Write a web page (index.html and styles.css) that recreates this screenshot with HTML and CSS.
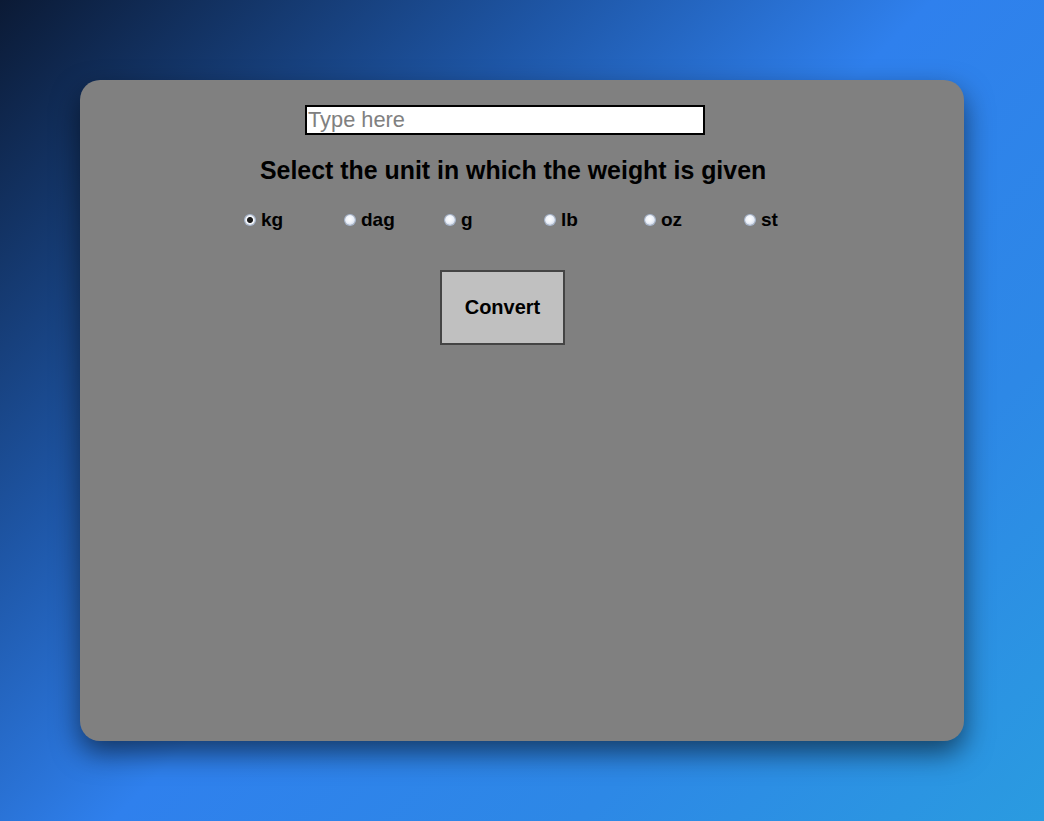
FILE: index.html
```html
<!DOCTYPE html>
<html>
<head>
<meta charset="utf-8">
<link rel="stylesheet" href="styles.css">
</head>
<body>
<div class="card">
  <input class="weight-input" type="text" placeholder="Type here">
  <h2 class="title">Select the unit in which the weight is given</h2>
  <div class="units">
    <label class="unit"><input type="radio" name="unit" checked><span>kg</span></label>
    <label class="unit"><input type="radio" name="unit"><span>dag</span></label>
    <label class="unit"><input type="radio" name="unit"><span>g</span></label>
    <label class="unit"><input type="radio" name="unit"><span>lb</span></label>
    <label class="unit"><input type="radio" name="unit"><span>oz</span></label>
    <label class="unit"><input type="radio" name="unit"><span>st</span></label>
  </div>
  <button class="convert">Convert</button>
</div>
</body>
</html>
```
FILE: styles.css
```css
html, body {
  margin: 0;
  padding: 0;
  height: 100%;
}
body {
  background: linear-gradient(135deg, #0b1a35 0%, #1e56a6 30%, #2f80ed 50%, #2d88e6 75%, #2a9be0 100%);
  font-family: "Liberation Sans", Arial, sans-serif;
  overflow: hidden;
}
.card {
  box-sizing: border-box;
  width: 884px;
  height: 661px;
  margin: 80px 0 0 80px;
  background: #808080;
  border-radius: 20px;
  box-shadow: 0 12px 28px rgba(0, 0, 0, 0.55);
  display: flex;
  flex-direction: column;
  align-items: flex-start;
  padding-top: 25px;
}
.weight-input {
  box-sizing: border-box;
  width: 400px;
  height: 30px;
  margin: 0 0 0 225px;
  border: 2px solid #000;
  padding: 0 1px;
  font-family: "Liberation Sans", Arial, sans-serif;
  font-size: 21.8px;
  background: #fff;
  outline: none;
}
.weight-input::placeholder {
  color: #808080;
}
.title {
  margin: 21px 0 0 180px;
  font-size: 24.9px;
  font-weight: bold;
  color: #000;
  line-height: 28px;
}
.units {
  display: grid;
  grid-template-columns: repeat(6, 100px);
  margin: 25px 0 0 164px;
}
.unit {
  display: flex;
  align-items: center;
  gap: 6px;
  font-size: 19px;
  font-weight: bold;
  line-height: 22px;
  color: #000;
}
.unit input {
  appearance: none;
  -webkit-appearance: none;
  width: 10px;
  height: 10px;
  margin: 0 0 0 1px;
  border-radius: 50%;
  background: radial-gradient(circle at 45% 40%, #ffffff 0%, #eef2fa 45%, #b9c8e0 100%);
  box-shadow: 0 0 0 1px #a7b7d0;
}
.unit input:checked {
  background: radial-gradient(circle, #1a1a1a 0 2.5px, #f4f6fa 3.5px, #c9d4e6 100%);
}
.convert {
  box-sizing: border-box;
  width: 125px;
  height: 75px;
  margin: 39px 0 0 360px;
  background: #c0c0c0;
  border: 2px solid #444;
  font-family: "Liberation Sans", Arial, sans-serif;
  font-size: 20px;
  font-weight: bold;
  color: #000;
  padding: 0;
}
```
